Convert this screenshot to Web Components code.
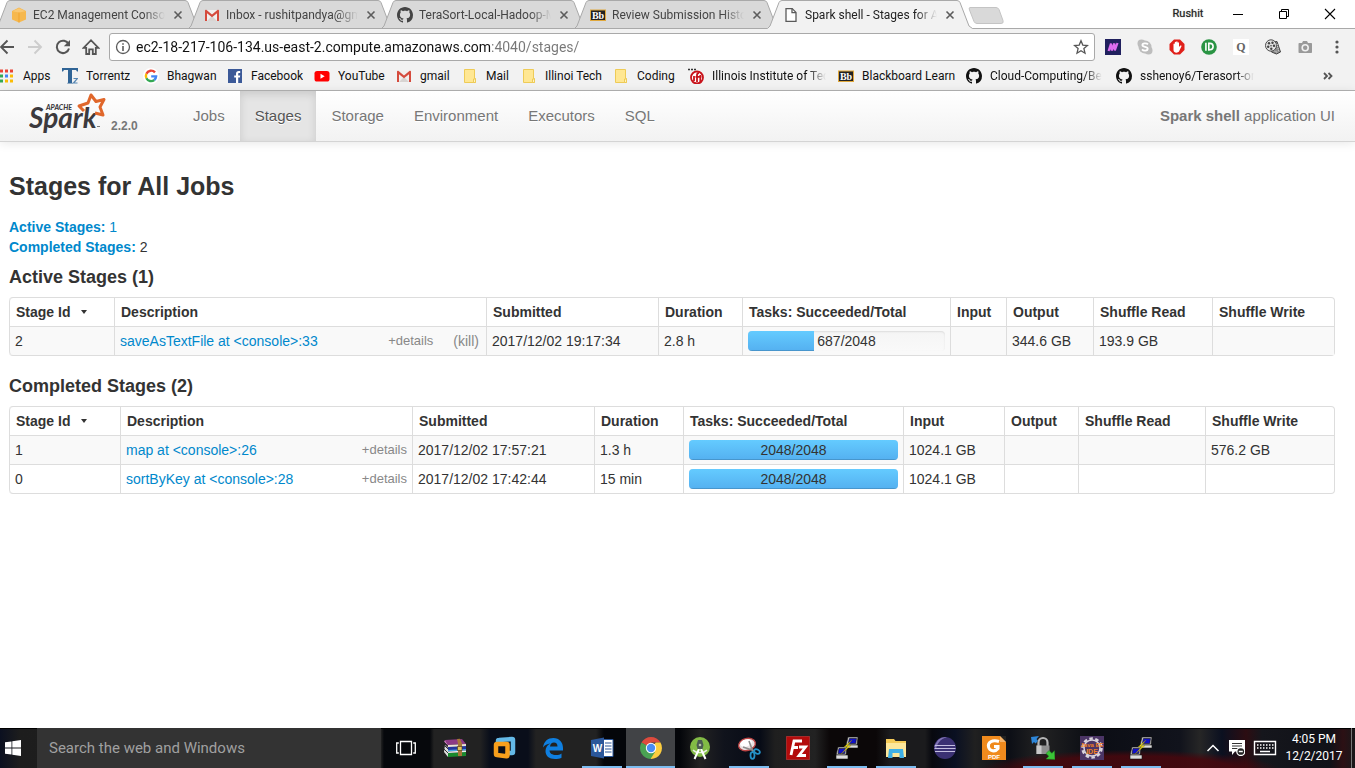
<!DOCTYPE html>
<html lang="en">
<head>
<meta charset="utf-8">
<title>Spark shell - Stages for All Jobs</title>
<style>
  html, body { margin: 0; height: 100%; background: #fff; }
  body { font-family: "Liberation Sans", Arial, sans-serif; overflow-x: hidden; }
</style>
</head>
<body>
<desktop-screen></desktop-screen>

<script>
const UI = 'Roboto, "Open Sans", sans-serif';

const GITHUB = '<path fill="currentColor" d="M8 0C3.58 0 0 3.58 0 8c0 3.54 2.29 6.53 5.47 7.59.4.07.55-.17.55-.38 0-.19-.01-.82-.01-1.49-2.01.37-2.53-.49-2.69-.94-.09-.23-.48-.94-.82-1.13-.28-.15-.68-.52-.01-.53.63-.01 1.08.58 1.23.82.72 1.21 1.87.87 2.33.66.07-.52.28-.87.51-1.07-1.78-.2-3.64-.89-3.64-3.95 0-.87.31-1.59.82-2.15-.08-.2-.36-1.02.08-2.12 0 0 .67-.21 2.2.82.64-.18 1.32-.27 2-.27s1.36.09 2 .27c1.53-1.04 2.2-.82 2.2-.82.44 1.1.16 1.92.08 2.12.51.56.82 1.27.82 2.15 0 3.07-1.87 3.75-3.65 3.95.29.25.54.73.54 1.48 0 1.07-.01 1.93-.01 2.2 0 .21.15.46.55.38A8.01 8.01 0 0 0 16 8c0-4.42-3.58-8-8-8z"/>';
const BB = '<rect x=".5" y="3" width="15" height="10.5" fill="#222" stroke="#e0a83c"/><text x="8" y="11.5" text-anchor="middle" font-family="Liberation Serif, serif" font-weight="700" font-size="10" fill="#fff">Bb</text>';
const GMAIL = '<path fill="#f1efee" d="M1 3h14v11H1z"/><path fill="#d8d4d2" d="M3 14l5-5 5 5z"/><path fill="#d54b3d" d="M1 14V3.6C1 2.6 2 2.5 2.600 3L8 7.400 13.400 3c.7-.6 1.600-.3 1.600.6V14h-2V6.300l-5 4-5-4V14z"/>';
const PUTTY = '<g stroke="#111" stroke-width=".6"><path fill="#c9c9c9" d="M13 1h10l-1 8H11z"/><path fill="#1010c8" d="M14.500 2.500h7l-.8 5h-7.400z"/><path fill="#ddd" d="M11 9h12v3H12z"/><path fill="#c9c9c9" d="M3 11h9l-1 8H1z"/><path fill="#1010c8" d="M4 12.500h6.500l-.8 5H3z"/><path fill="#ddd" d="M1 19h12v4H1z"/></g><path fill="#ffee1a" stroke="#8a7a00" stroke-width=".4" d="M17 4l-8 7 4-.5L6 18l10-8.500-4 .5z"/>';

/* name: [viewBox size, markup] */
const ICONS = {
  ec2: [16, '<path fill="#f6b84e" d="M1 4l7-3.500L15 4v8.500L8 15.500 1 12.500z"/><path fill="#f9c873" d="M1.500 4.200L8 1.200l6.500 3L8 5.500z"/><path stroke="#f1a32c" d="M8 5.500v10" fill="none"/>'],
  gmail: [16, GMAIL],
  github: [16, GITHUB],
  bb: [16, BB],
  page: [16, '<path fill="#fff" stroke="#5a5a5a" stroke-width="1.300" d="M3 1.600h6.200L13 5.400v9H3z"/><path fill="none" stroke="#5a5a5a" stroke-width="1.300" d="M9 1.600v4h4"/>'],
  close: [16, '<path stroke="#5c5c5c" stroke-width="1.600" d="M4.500 4.500l7 7m0-7l-7 7"/>'],
  back: [16, '<path fill="none" stroke="#555" stroke-width="1.900" d="M15 8H2.500M8.500 1.500L2 8l6.500 6.500"/>'],
  forward: [16, '<path fill="none" stroke="#cdcdcd" stroke-width="1.900" d="M1 8h12.500M7.500 1.500L14 8l-6.500 6.500"/>'],
  reload: [16, '<path fill="none" stroke="#555" stroke-width="2" d="M13.600 5.200A6.200 6.200 0 1 0 14 9.500"/><path fill="#555" d="M15 1v6.200H8.800z"/>'],
  home: [18, '<path fill="none" stroke="#555" stroke-width="1.800" d="M1.600 9.800L9 2.200l7.400 7.600h-2.600V16H10.800v-4.600H7.200V16H4.200V9.800z"/>'],
  info: [16, '<circle cx="8" cy="8" r="6.500" fill="none" stroke="#5a5a5a" stroke-width="1.300"/><path fill="#5a5a5a" d="M7.200 4.200h1.600v1.600H7.200zM7.200 7h1.600v5H7.200z"/>'],
  star: [16, '<path fill="none" stroke="#555" stroke-width="1.300" d="M8 1.800l1.800 4.300 4.700.4-3.600 3.100 1.100 4.600L8 11.700l-4 2.500 1.100-4.600L1.500 6.500l4.700-.4z"/>'],
  extM: [16, '<path fill="#20205e" d="M0 0h16v16H0z"/><path fill="none" stroke="#dd6cf0" stroke-width="2.200" d="M3.600 12L6 4.500l.6 7L9.400 4.500l.4 7L12.500 4"/>'],
  skype: [16, '<g fill="#bdbdbd"><circle cx="8" cy="8" r="6.500"/><circle cx="4.500" cy="4.500" r="4"/><circle cx="11.500" cy="11.500" r="4"/></g><path fill="none" stroke="#fff" stroke-width="1.800" d="M11 5.300C9.500 3.800 5.400 4 5.400 6.100c0 2.400 5.300 1.300 5.300 3.700 0 2.200-4 2.400-5.700.6"/>'],
  hand: [16, '<path fill="#e0201a" d="M5 .5h6L15.500 5v6L11 15.500H5L.5 11V5z"/><path fill="#fff" d="M4.500 8V5.200c0-1 1.300-1 1.300 0V3.500c0-1 1.400-1 1.400 0v-.6c0-1 1.400-1 1.400 0v1c0-1 1.400-.8 1.400.2v4l1-1.300c.8-.9 1.900-.2 1.400.6L10 12.500c-1.500 2-5.500 1.300-5.500-1.500z"/>'],
  pushb: [16, '<circle cx="8" cy="8" r="7.800" fill="#2a9444"/><path fill="none" stroke="#fff" stroke-width="1.600" d="M7.800 11.800V4.400h1.100a3.200 3.200 0 0 1 0 6.400H7.800"/><path stroke="#fff" stroke-width="1.600" d="M4.900 3.800v8"/>'],
  quora: [16, '<path fill="#fff" d="M0 0h16v16H0z"/><text x="8" y="12" text-anchor="middle" font-family="Liberation Serif, serif" font-size="12" font-weight="700" fill="#666">Q</text>'],
  film: [16, '<path fill="#8d8d8d" stroke="#444" d="M7 3l5-.5 3.500 10.500-4 2-5-2z"/><ellipse cx="6" cy="6.500" rx="5.500" ry="5.700" fill="#e3e3e3" stroke="#4c4c4c"/><g fill="#444"><circle cx="4" cy="4.200" r="1.200"/><circle cx="7.500" cy="3.800" r="1.200"/><circle cx="3.200" cy="7.800" r="1.200"/><circle cx="6" cy="6.800" r=".8"/><circle cx="9" cy="6.800" r="1.200"/><circle cx="6.300" cy="9.800" r="1.200"/></g><path stroke="#ddd" stroke-dasharray="1 1" d="M12 5l2 8M9.500 12l3 1.500"/>'],
  camera: [16, '<path fill="#9a9a9a" d="M2.500 4H5l1-2h4l1 2h3c.6 0 1 .4 1 1v8c0 .6-.4 1-1 1H2.500c-.6 0-1-.4-1-1V5c0-.6.4-1 1-1z"/><circle cx="8.200" cy="8.800" r="3" fill="none" stroke="#f1f1f1" stroke-width="1.600"/>'],
  dots: [16, '<g fill="#555"><circle cx="8" cy="3" r="1.600"/><circle cx="8" cy="8" r="1.600"/><circle cx="8" cy="13" r="1.600"/></g>'],
  apps: [16, '<path fill="#ea4335" d="M1 1.500h3v3H1zM6 1.500h3v3H6zM11 1.500h3v3h-3z"/><path fill="#34a853" d="M1 6.500h3v3H1zM1 11.500h3v3H1z"/><path fill="#4285f4" d="M6 6.500h3v3H6z"/><path fill="#fbbc05" d="M11 6.500h3v3h-3zM6 11.500h3v3H6zM11 11.500h3v3h-3z"/>'],
  torrentz: [16, '<path fill="#2f6496" d="M0 0h16v3.500h-1L14 2h-4v12.500l1 1H5l1-1V2H2L1 3.500H0z"/><path fill="none" stroke="#5787b3" stroke-width="1.200" d="M11.500 10.500h4l-4 4.500h4"/>'],
  google: [16, '<circle cx="8" cy="8" r="8" fill="#fff"/><g fill="none" stroke-width="2.400"><path stroke="#ea4335" d="M12 4.400A5.200 5.200 0 0 0 3.400 5.700"/><path stroke="#fbbc05" d="M3.400 5.700a5.200 5.200 0 0 0 0 4.600"/><path stroke="#34a853" d="M3.400 10.300a5.200 5.200 0 0 0 7.900 1.700"/><path stroke="#4285f4" d="M11.300 12a5 5 0 0 0 1.800-3.600H8.200"/></g>'],
  facebook: [16, '<path fill="#3b5998" d="M1 1h14v14H1z"/><path fill="#fff" d="M9 15V9.500H7.200V7.400H9V5.800C9 3.900 10 3 11.700 3h1.500v2h-1.100c-.7 0-.9.4-.9 1v1.400h2l-.3 2.100h-1.700V15z"/>'],
  youtube: [16, '<rect x="0.500" y="3" width="15" height="10.500" rx="2.600" fill="#f00"/><path fill="#fff" d="M6.500 5.800v5l4.200-2.500z"/>'],
  folder: [16, '<path fill="#ffe793" stroke="#eecb57" d="M2.500 1.500h10v9h1v4h-11z"/><path fill="#fff3c2" stroke="#eecb57" d="M11.500 11h2v3.500h-2z"/>'],
  iit: [16, '<circle cx="9" cy="9.500" r="6" fill="#fff" stroke="#c8131b" stroke-width="1.800"/><path stroke="#c8131b" stroke-width="1.800" fill="none" d="M6 8v5M9 14V7q0-2 2-2M12.300 14V7M7.500 8.800h6"/><path stroke="#333" stroke-width="1.600" stroke-dasharray="2 1" d="M0 1.500h8"/>'],
  win: [16, '<path fill="#fff" d="M0 2.300L6.500 1.400v6.200H0zM7.300 1.300L16 0v7.600H7.300zM0 8.400h6.500v6.200L0 13.700zM7.300 8.400H16V16l-8.700-1.200z"/>'],
  taskview: [20, '<g fill="none" stroke="#fff" stroke-width="1.300"><path d="M4.500 3.500h11v13h-11zM2.800 5H.7v10h2.100M17.200 5h2.100v10h-2.100"/></g>'],
  winrar: [24, '<path fill="#8d3a86" d="M2 4l17-1 4 5-18 1z"/><path fill="#c874bd" d="M2 4l3 5v2l-4-5z"/><path fill="#ece3d6" d="M5 9l18-1v3L5 12z"/><path fill="#24369c" d="M5 11l18-1v4L5 15z"/><path fill="#ddd" d="M2 9l3 3v9l-4-5z"/><path fill="#49a7e8" d="M5 14l18-1v1.500L5 15.500z"/><path fill="#198a2e" d="M5 17l18-1v4L5 21z"/><path fill="#eee" d="M5 15.500l18-1V16L5 17z"/><path stroke="#333" d="M1 9l4 4M1 13l4 4M1 6l4 4"/><path fill="#a8753a" d="M14 3l3-.2 2 5V20h-4V8z"/><path fill="#e2c35d" stroke="#4d3510" stroke-width=".6" d="M14.500 10.500h4.500v4h-4.500z"/>'],
  vmware: [24, '<path fill="none" stroke="#63b9e8" stroke-width="4.500" stroke-linejoin="round" d="M6 9V5q0-1 1-1L20 3q1 0 1 1v12q0 1-1 1h-4"/><path fill="none" stroke="#f79f1c" stroke-width="4.500" stroke-linejoin="round" d="M4 9q0-1 1-1h9.500q1 0 1 1v10q0 1.500-1 1.300L5 19q-1 0-1-1z"/>'],
  edge: [24, '<path fill="#0f7fe0" d="M2 11.500C3 5 7 2 12.300 2 18.500 2 22 6.500 22 12v2.500H8.500c.2 3 2.800 4.500 6.500 4.500 2.500 0 4-.6 5.500-1.600v4.300c-2 1.200-4 1.300-6.500 1.300-5.800 0-9.500-3-9.500-8 0-3.300 1.800-6 4.800-7.500C6 7.800 4 9 2 11.500zM9 10.500h7.500c0-2.600-1.300-4-3.500-4S9.300 8 9 10.500z"/>'],
  word: [24, '<path fill="#fff" stroke="#2b579a" d="M11 3.500h12v17H11z"/><path stroke="#2b579a" stroke-width="1.200" d="M15 7h6.500M15 10h6.500M15 13h6.500M15 16h6.500"/><path fill="#2b579a" d="M1 4l13-2.500v21L1 20z"/><text x="7.500" y="16" text-anchor="middle" font-family="Liberation Sans, sans-serif" font-size="10" font-weight="700" fill="#fff">W</text>'],
  chrome: [24, '<path fill="#dd4b3e" d="M12 12L2.500 6.500A11 11 0 0 1 21.500 6.500H12z"/><path fill="#fccd3f" d="M12 12l4.800-5.500h4.700A11 11 0 0 1 12 23l-.5-.2z"/><path fill="#4aa253" d="M12 12l4 4-4.500 7A11 11 0 0 1 2.500 6.500z"/><circle cx="12" cy="12" r="5.200" fill="#fff"/><circle cx="12" cy="12" r="4.200" fill="#4a8cf5"/>'],
  android: [24, '<circle cx="12" cy="11" r="10" fill="#82bb45"/><path fill="none" stroke="#e8eee0" stroke-width="1.300" d="M5 14c3 3.500 11 3.500 14 0"/><path fill="none" stroke="#fff" stroke-width="2" d="M11 13L6.500 23M13 13l4.500 10"/><path fill="#4b5c52" d="M10 4h4l1.500 5-1 4h-5l-1-4z"/><circle cx="12" cy="9" r="1.300" fill="#b8c5a8"/>'],
  snip: [24, '<ellipse cx="10" cy="8.500" rx="8.500" ry="6" fill="#e9e2e2" stroke="#b44" stroke-width="1.400" transform="rotate(-15 10 8.500)"/><ellipse cx="9" cy="7" rx="6" ry="3.500" fill="#fff" transform="rotate(-15 9 7)"/><path stroke="#8d8d8d" stroke-width="1.600" d="M12 5l4 11M6 11l12 4"/><g fill="none" stroke="#2491c7" stroke-width="1.800"><ellipse cx="15.500" cy="19.500" rx="2" ry="3.300"/><ellipse cx="20" cy="15.500" rx="3" ry="2" transform="rotate(30 20 15.500)"/></g>'],
  filezilla: [24, '<path fill="#b30b0b" stroke="#e04040" stroke-dasharray="1 1" d="M.5.5h23v23H.5z"/><path fill="none" stroke="#fff" stroke-width="2.800" d="M5 19L8 5h8M6.500 11.500H12M13 11h6.500l-6.500 8.500H20"/>'],
  putty: [24, PUTTY],
  explorer: [24, '<path fill="#f5cb58" d="M2 3h8l1.500 2H22v16H2z"/><path fill="#fde79b" d="M2 7h20v14H2z"/><path fill="#3fb0e6" d="M5 13h14l1 9h-4.500v-5h-7v5H4z"/>'],
  eclipse: [24, '<circle cx="12" cy="12" r="11" fill="#3b3173"/><path fill="#8174b5" d="M5 4a11 11 0 0 1 9-3C7 3 4 8 3 13L1.200 10z"/><path stroke="#c5bfe0" stroke-width="1.200" d="M2 9.500h20M1.500 12.500h21M2 15.500h20"/>'],
  foxit: [24, '<path fill="#f08a1d" d="M0 0h18l6 6v18H0z"/><path fill="#222" d="M18 0h6v6z"/><path fill="#f7b46a" d="M18 0v6h6z"/><path fill="none" stroke="#fff" stroke-width="3" d="M17 5.500C10 3 5.500 7 6.500 11s6.500 5.500 9.500 1.500v-2h-4"/><text x="12" y="23" text-anchor="middle" font-family="Liberation Sans, sans-serif" font-size="6" font-weight="700" fill="#fff">PDF</text>'],
  winscp: [24, '<path fill="none" stroke="#b5b5b5" stroke-width="2.200" d="M7.500 10V6.500a4.500 4.500 0 0 1 9 0V10"/><path fill="#8f8f8f" d="M5.500 9.500h13V18h-13z"/><path fill="#c9c9c9" d="M5.500 9.500h5V18h-5z"/><path fill="#2d86d8" d="M0 1l8-1-2.500 3L7 5 4.500 7.500 3 6 1 8z"/><path fill="#3bc437" stroke="#1f7f1d" stroke-width=".5" d="M24 23.500l-9-.5 2.800-2.800L15 17.500l3-3 2.800 2.800 2.700-2.600z"/>'],
  javaee: [24, '<path fill="#4b3566" d="M0 0h24v24H0z"/><circle cx="12" cy="12" r="9.500" fill="none" stroke="#d9d4dd" stroke-width="2.500" stroke-dasharray="3.500 2.470"/><circle cx="12" cy="12" r="8" fill="#4b3566" stroke="#d9d4dd" stroke-width="1.500"/><g font-family="Liberation Sans, sans-serif" font-weight="700" fill="#f08022" text-anchor="middle"><text x="12" y="11" font-size="6">Java EE</text><text x="12" y="18" font-size="7">IDE</text></g>'],
  chevron: [16, '<path fill="none" stroke="#fff" stroke-width="1.500" d="M2.500 11L8 5.500 13.500 11"/>'],
  note: [16, '<path fill="#fff" d="M0 0h16v11.500H6L3 15v-3.500H0z"/><path stroke="#333" d="M3 3.500h10M3 6h10M3 8.500h6"/><circle cx="11.800" cy="11.500" r="4" fill="#222" stroke="#fff" stroke-width="1.300"/><path stroke="#fff" stroke-width="1.500" d="M9.800 11.500h4"/>'],
  keyboard: [24, '<path fill="none" stroke="#fff" stroke-width="1.400" d="M1.500 5.500h21v13h-21z"/><path stroke="#fff" stroke-width="1.500" stroke-dasharray="1.500 1.500" d="M4 9h16.500M4 12h16.500"/><path stroke="#fff" stroke-width="1.500" d="M7 15.500h10"/>'],
  min: [12, '<path stroke="#000" d="M1 6.500h10"/>'],
  restore: [12, '<path fill="none" stroke="#000" d="M3.500 3V1.500h7v7H9M1.500 3.500h7v7h-7z"/>'],
  quit: [12, '<path stroke="#000" stroke-width="1.100" d="M1 1l10 10M11 1L1 11"/>'],
  more: [12, '<path fill="none" stroke="#555" stroke-width="1.800" d="M2 3l3 3-3 3M6.500 3l3 3-3 3"/>']
};

class BaseElement extends HTMLElement {
  connectedCallback() {
    if (this.shadowRoot) return;
    const t = document.createElement('template');
    t.innerHTML = this.view();
    this.attachShadow({ mode: 'open' }).append(t.content.cloneNode(true));
  }
}

class AppIcon extends BaseElement {
  view() {
    const [box, art] = ICONS[this.getAttribute('name')];
    const size = this.getAttribute('size') || 16;
    return `<style>:host{display:block;flex:none;width:${size}px;height:${size}px}svg{display:block;width:100%;height:100%}</style>
      <svg viewBox="0 0 ${box} ${box}" aria-hidden="true">${art}</svg>`;
  }
}

class BrowserTab extends BaseElement {
  view() {
    const on = this.hasAttribute('active');
    return `<style>
      :host{display:block;position:relative;flex:0 0 193px;height:29px;box-sizing:border-box}
      .shape{position:absolute;left:-5px;top:0;width:206px;height:29px}
      .row{position:relative;display:flex;align-items:center;height:29px;padding:1px 0 0 11px;box-sizing:border-box;gap:6px}
      a{flex:0 0 132px;font:12px/16px ${UI};color:${on ? '#222' : '#444'};text-decoration:none;white-space:nowrap;overflow:hidden;
        -webkit-mask-image:linear-gradient(90deg,#000 84%,transparent);mask-image:linear-gradient(90deg,#000 84%,transparent)}
      button{border:0;background:none;padding:0;margin-left:-1px;}
    </style>
    <svg class="shape" viewBox="0 0 206 29" aria-hidden="true">
      <path d="M.5 28.500L3 26L12 2.500Q13 .5 15 .5H190Q192 .5 193 2.500L202 26L205.500 28.500${on ? 'V29H0' : 'z'}" fill="${on ? '#f2f2f2' : '#d9d9d9'}" stroke="${on ? 'none' : '#a9a9a9'}"/>
      ${on ? '<path d="M.5 28.500L3 26L12 2.500Q13 .5 15 .5H190Q192 .5 193 2.500L202 26L205.500 28.500" fill="none" stroke="#a9a9a9"/>' : ''}
    </svg>
    <div class="row"><slot name="icon"></slot><a href="#"><slot></slot></a><button aria-label="Close tab"><app-icon name="close"></app-icon></button></div>`;
  }
}

class BookMark extends BaseElement {
  view() {
    const fade = this.hasAttribute('fade') ? '-webkit-mask-image:linear-gradient(90deg,#000 84%,transparent);mask-image:linear-gradient(90deg,#000 84%,transparent)' : '';
    return `<style>
      :host{display:block;min-width:0}
      a{display:flex;align-items:center;gap:8px;height:22px;color:#111;text-decoration:none;font:12px/16px ${UI};white-space:nowrap}
      span{max-width:114px;overflow:hidden;${fade}}
    </style><a href="#"><app-icon name="${this.getAttribute('icon')}"></app-icon><span><slot></slot></span></a>`;
  }
}

class BrowserChrome extends BaseElement {
  view() {
    const ext = ['extM', 'skype', 'hand', 'pushb', 'quora', 'film', 'camera', 'dots'];
    return `<style>
      :host{display:block;background:#f2f2f2;border-bottom:1px solid #b3b3b3}
      button{border:0;background:none;padding:0;display:grid;place-items:center}
      .tabs{display:flex;background:#fff;height:29px;box-shadow:inset 0 -1px #a9a9a9}
      browser-tab{z-index:1}
      browser-tab[active]{z-index:3}
      .new{width:36px;height:19px;margin:6px 0 0 3px;padding:0;flex:none}
      .window{margin-left:auto;display:flex;align-items:center;height:27px;padding-right:2px}
      .window button{width:46px;height:27px}
      .window .user{font:11px/14px ${UI};color:#222;text-shadow:0 0 1px #777;height:auto;margin-right:4px}
      .bar{display:flex;align-items:center;height:36px;padding-right:2px}
      .nav{display:flex;margin-left:-7px;margin-right:4px}
      .nav button{width:28px;height:28px}
      .url{flex:1;display:flex;align-items:center;gap:5px;height:28px;box-sizing:border-box;border:1px solid #a9a9a9;border-radius:3px;background:#fff;padding:0 5px;margin-right:2px}
      input{flex:1;min-width:0;border:0;outline:0;padding:0;height:24px;font:14px/24px ${UI};color:#111;
        background:linear-gradient(90deg,#111 355px,#777 355px);-webkit-background-clip:text;background-clip:text;-webkit-text-fill-color:transparent}
      .ext button{width:32px;height:28px}
      .ext{display:flex}
      .marks{display:grid;grid-template-columns:63px 81px 84px 87px 82px 66px 59px 92px 75px 150px 128px 150px 1fr auto;height:25px;align-items:center;margin-left:-1px;padding-right:21px;align-content:start}
    </style>
    <div class="tabs">
      <browser-tab><app-icon slot="icon" name="ec2"></app-icon>EC2 Management Console</browser-tab>
      <browser-tab><app-icon slot="icon" name="gmail"></app-icon>Inbox - rushitpandya@gmail</browser-tab>
      <browser-tab><app-icon slot="icon" name="github" style="color:#444"></app-icon>TeraSort-Local-Hadoop-M</browser-tab>
      <browser-tab><app-icon slot="icon" name="bb"></app-icon>Review Submission History</browser-tab>
      <browser-tab active><app-icon slot="icon" name="page"></app-icon>Spark shell - Stages for All</browser-tab>
      <button class="new" aria-label="New tab"><svg width="36" height="19" aria-hidden="true"><path d="M2 1.500h26q2 0 3 2l4 11q1 3-2 3H9q-2 0-3-2L1.500 4q-1-2.500.5-2.500z" fill="#d9d9d9" stroke="#c4c4c4"/></svg></button>
      <div class="window">
        <button class="user">Rushit</button>
        <button aria-label="Minimize"><app-icon name="min" size="12"></app-icon></button>
        <button aria-label="Restore"><app-icon name="restore" size="12"></app-icon></button>
        <button aria-label="Close"><app-icon name="quit" size="12"></app-icon></button>
      </div>
    </div>
    <div class="bar">
      <div class="nav">
        <button aria-label="Back"><app-icon name="back"></app-icon></button>
        <button aria-label="Forward"><app-icon name="forward"></app-icon></button>
        <button aria-label="Reload"><app-icon name="reload"></app-icon></button>
        <button aria-label="Home"><app-icon name="home" size="18"></app-icon></button>
      </div>
      <div class="url">
        <app-icon name="info"></app-icon>
        <input type="text" aria-label="Address" value="ec2-18-217-106-134.us-east-2.compute.amazonaws.com:4040/stages/">
        <app-icon name="star"></app-icon>
      </div>
      <div class="ext">${ext.map(n => `<button aria-label="${n}"><app-icon name="${n}"></app-icon></button>`).join('')}</div>
    </div>
    <div class="marks">
      <book-mark icon="apps">Apps</book-mark>
      <book-mark icon="torrentz">Torrentz</book-mark>
      <book-mark icon="google">Bhagwan</book-mark>
      <book-mark icon="facebook">Facebook</book-mark>
      <book-mark icon="youtube">YouTube</book-mark>
      <book-mark icon="gmail">gmail</book-mark>
      <book-mark icon="folder">Mail</book-mark>
      <book-mark icon="folder">Illinoi Tech</book-mark>
      <book-mark icon="folder">Coding</book-mark>
      <book-mark icon="iit" fade>Illinois Institute of Tec</book-mark>
      <book-mark icon="bb">Blackboard Learn</book-mark>
      <book-mark icon="github" fade>Cloud-Computing/Be</book-mark>
      <book-mark icon="github" fade>sshenoy6/Terasort-on</book-mark>
      <button aria-label="More bookmarks"><app-icon name="more" size="12"></app-icon></button>
    </div>`;
  }
}

class SparkNav extends BaseElement {
  view() {
    const items = ['Jobs', 'Stages', 'Storage', 'Environment', 'Executors', 'SQL'];
    return `<style>
      :host{display:flex;height:50px;padding:0 20px 0 29px;background:linear-gradient(#fff,#f2f2f2);border-bottom:1px solid #d4d4d4;box-shadow:0 1px 10px rgba(0,0,0,.1);font-size:15px;line-height:20px;color:#777}
      .brand{display:flex;width:149px;gap:4px;text-decoration:none;color:#777}
      svg{display:block;flex:none}
      .version{font-size:12px;font-weight:700;line-height:20px;padding-top:25px}
      nav{display:flex}
      nav a{padding:15px 15px;color:#777;text-decoration:none;text-shadow:0 1px 0 #fff}
      nav a.on{color:#555;background:#e5e5e5;box-shadow:inset 0 3px 8px rgba(0,0,0,.125)}
      p{margin:0 0 0 auto;padding-top:15px;white-space:nowrap}
    </style>
    <a class="brand" href="#"><svg width="78" height="50" viewBox="0 0 78 50" role="img" aria-label="Apache Spark">
      <g font-family="Lato, sans-serif" font-style="italic" fill="#3c3a3e"><text x="0" y="37" font-size="28" font-weight="700">Spark</text><text x="17" y="19" font-size="7" font-weight="900">APACHE</text></g>
      <path fill="none" stroke="#e0672b" stroke-width="3" stroke-linejoin="round" d="M55 20l-5-5 9-3 3-8 5 6.500 8-2-4 7.500 3 8-8-2"/>
      <path stroke="#777" d="M68 35.500h3"/>
    </svg><span class="version">2.2.0</span></a>
    <nav>${items.map((t, i) => `<a href="#"${i === 1 ? ' class="on" aria-current="page"' : ''}>${t}</a>`).join('')}</nav>
    <p><b>Spark shell</b> application UI</p>`;
  }
}

const HEADS = ['Stage Id', 'Description', 'Submitted', 'Duration', 'Tasks: Succeeded/Total', 'Input', 'Output', 'Shuffle Read', 'Shuffle Write'];
const STAGES = {
  active: {
    cols: [105, 372, 172, 84, 208, 56, 87, 119, 122],
    rows: [['2', 'saveAsTextFile at &lt;console&gt;:33', '2017/12/02 19:17:34', '2.8 h', [687, 2048], '', '344.6 GB', '193.9 GB', '']]
  },
  completed: {
    cols: [111, 292, 182, 89, 220, 101, 74, 127, 129],
    rows: [
      ['1', 'map at &lt;console&gt;:26', '2017/12/02 17:57:21', '1.3 h', [2048, 2048], '1024.1 GB', '', '', '576.2 GB'],
      ['0', 'sortByKey at &lt;console&gt;:28', '2017/12/02 17:42:44', '15 min', [2048, 2048], '1024.1 GB', '', '', '']
    ]
  }
};

class TaskProgress extends BaseElement {
  view() {
    const done = +this.getAttribute('done'), total = +this.getAttribute('total');
    return `<style>
      :host{display:grid;height:20px;border-radius:4px;overflow:hidden;background:linear-gradient(#f5f5f5,#f9f9f9);box-shadow:inset 0 1px 2px rgba(0,0,0,.1)}
      div,span{grid-area:1/1}
      div{width:${done / total * 100}%;background:linear-gradient(#64cbff,#54b0f0);box-shadow:inset 0 -1px 0 rgba(0,0,0,.15)}
      span{text-align:center;line-height:20px}
    </style><div></div><span>${done}/${total}</span>`;
  }
}

class StageTable extends BaseElement {
  view() {
    const kind = this.getAttribute('kind'), { cols, rows } = STAGES[kind];
    const cell = (v, i) => {
      if (i === 1) return `<div class="desc"><a href="#">${v}</a><button>+details</button>${kind === 'active' ? '<a class="kill" href="#">(kill)</a>' : ''}</div>`;
      if (i === 4) return `<task-progress done="${v[0]}" total="${v[1]}"></task-progress>`;
      return v;
    };
    return `<style>
      :host{display:block;margin-bottom:20px}
      table{width:100%;table-layout:fixed;border-collapse:separate;border-spacing:0;border:1px solid #ddd;border-left:0;border-radius:4px;font-size:14px;line-height:20px;color:#333}
      th,td{height:20px;padding:4px 5px;text-align:left;border-left:1px solid #ddd;white-space:nowrap}
      td{border-top:1px solid #ddd}
      th:first-child{border-top-left-radius:4px}
      tr:last-child td:first-child{border-bottom-left-radius:4px}
      th{padding-left:6px}
      tbody tr:nth-child(odd) td{background:#f9f9f9}
      .head{display:flex;align-items:center;gap:11px;height:20px}
      .head svg{display:block}
      .desc{display:flex;align-items:center}
      a{color:#08c;text-decoration:none}
      button{margin-left:auto;border:0;padding:0;background:none;font:13px/20px "Liberation Sans",Arial,sans-serif;color:#888}
      .kill{margin:0 2px 0 20px;color:#888}
    </style>
    <table><colgroup>${cols.map(w => `<col style="width:${w}px">`).join('')}</colgroup>
      <thead><tr>${HEADS.map((h, i) => `<th scope="col">${i ? h : `<div class="head">${h}<svg width="6" height="4" aria-hidden="true"><path fill="#333" d="M0 0h6L3 4z"/></svg></div>`}</th>`).join('')}</tr></thead>
      <tbody>${rows.map(r => `<tr>${r.map((v, i) => `<td>${cell(v, i)}</td>`).join('')}</tr>`).join('')}</tbody>
    </table>`;
  }
}

class StagesPage extends BaseElement {
  view() {
    return `<style>
      :host{display:block;flex:1;background:#fff;color:#333}
      main{padding:24px 20px 0 9px}
      h3{margin:0 0 11px;font-size:25px;line-height:40px}
      h4{margin:0 0 10px;font-size:18px;line-height:20px}
      ul{list-style:none;margin:0 0 10px;padding:0;font-size:14px;line-height:20px}
      a{color:#08c;text-decoration:none}
    </style>
    <spark-nav></spark-nav>
    <main>
      <h3>Stages for All Jobs</h3>
      <ul><li><a href="#"><b>Active Stages:</b> 1</a></li><li><a href="#"><b>Completed Stages:</b></a> 2</li></ul>
      <h4>Active Stages (1)</h4><stage-table kind="active"></stage-table>
      <h4>Completed Stages (2)</h4><stage-table kind="completed"></stage-table>
    </main>`;
  }
}

class TaskItem extends BaseElement {
  view() {
    return `<style>
      :host{display:block;width:49px;height:40px;flex:none}
      button{display:grid;place-items:center;width:100%;height:40px;border:0;padding:0;background:none}
      :host([open]) button{background:linear-gradient(#7cbcf0,#7cbcf0) 50% 100%/40px 2px no-repeat}
      :host([current]) button{background:linear-gradient(#7cbcf0,#7cbcf0) 50% 100%/49px 2px no-repeat #414346}
    </style><button aria-label="${this.getAttribute('icon')}"><app-icon name="${this.getAttribute('icon')}" size="${this.getAttribute('size') || 24}"></app-icon></button>`;
  }
}

class TaskBar extends BaseElement {
  view() {
    const apps = ['winrar', 'vmware', 'edge', 'word open', 'chrome current', 'android', 'snip open', 'filezilla', 'putty open', 'explorer open', 'eclipse', 'foxit', 'winscp open', 'javaee open', 'putty open'];
    return `<style>
      :host{display:flex;align-items:center;height:40px;box-sizing:border-box;overflow:hidden;color:#fff;box-shadow:inset 0 1px #000;
        background:radial-gradient(ellipse 150px 20px at 1130px 42px,rgba(70,8,14,.9) 70%,transparent 100%),
        linear-gradient(90deg,#0b1020 0,#1d1d1d 20px,#222 381px,#06080c 384px,#06080c 430px,#222 434px,#222 480px,#090e1a 490px,#090e1a 528px,#222 536px,#222 596px,#04060a 604px,#04060a 680px,#222 700px,#10131c 724px,#070b16 760px,#1f1f1f 775px,#222 815px,#0b0708 830px,#0b0708 876px,#1b1b1d 890px,#1b1b1d 925px,#08090f 932px,#0a1022 955px,#202020 975px,#0d0f16 1010px,#222 1040px,#0b0d14 1090px,#11131c 1180px,#262626 1200px,#0b1020 1222px,#2c0d12 1246px,#15161c 1262px,#101118 1330px,#2c1014 1343px,#18181a 1355px)}
      .start{width:37px;height:40px;border:0;background:none;padding:0 16px 0 5px;display:grid;place-items:center;flex:none}
      input{width:344px;height:40px;box-sizing:border-box;border:0;outline:0;padding:0 12px;background:#333;color:#fff;font:15px/20px ${UI}}
      input::placeholder{color:#a0a0a0;opacity:1}
      .tray{display:flex;align-items:center;gap:8px;margin-left:auto;height:40px}
      .tray button{border:0;background:none;padding:0}
      .clock{font:12px/17px ${UI};color:#fff;text-align:center;display:block;width:58px}
      .peek{width:4px;height:40px;box-sizing:border-box;border-left:1px solid #777}
    </style>
    <button class="start" aria-label="Start"><app-icon name="win"></app-icon></button>
    <input type="search" aria-label="Search" placeholder="Search the web and Windows">
    <task-item icon="taskview" size="20"></task-item>
    ${apps.map(a => { const [n, s = ''] = a.split(' '); return `<task-item icon="${n}" ${s}></task-item>`; }).join('')}
    <div class="tray">
      <button aria-label="Show hidden icons"><app-icon name="chevron"></app-icon></button>
      <button aria-label="Notifications"><app-icon name="note"></app-icon></button>
      <button aria-label="Keyboard"><app-icon name="keyboard" size="24"></app-icon></button>
      <time class="clock">4:05 PM<br>12/2/2017</time>
      <span class="peek"></span>
    </div>`;
  }
}

class DesktopScreen extends BaseElement {
  view() {
    return `<style>:host{display:flex;flex-direction:column;min-height:100vh}</style>
      <browser-chrome></browser-chrome><stages-page></stages-page><task-bar></task-bar>`;
  }
}

Object.entries({
  'app-icon': AppIcon, 'browser-tab': BrowserTab, 'book-mark': BookMark, 'browser-chrome': BrowserChrome,
  'spark-nav': SparkNav, 'task-progress': TaskProgress, 'stage-table': StageTable, 'stages-page': StagesPage,
  'task-item': TaskItem, 'task-bar': TaskBar, 'desktop-screen': DesktopScreen
}).forEach(([name, cls]) => customElements.define(name, cls));
</script>
</body>
</html>
